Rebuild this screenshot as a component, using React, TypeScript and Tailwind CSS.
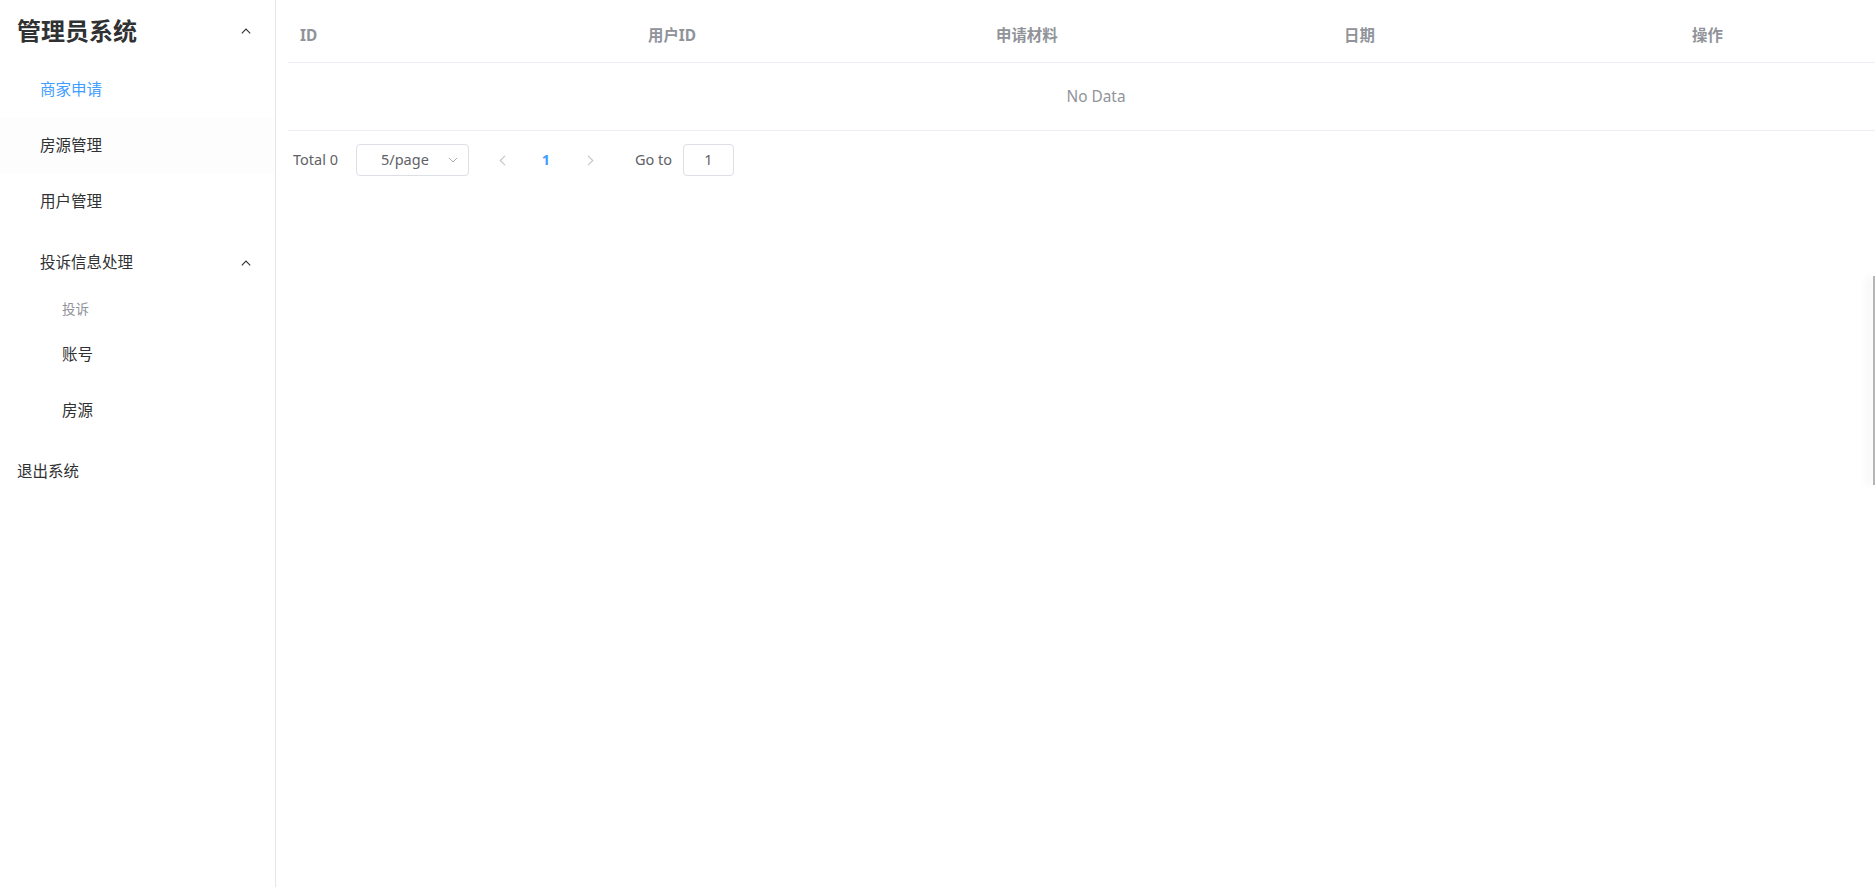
import React from "react";

const ChevronUp = () => (
  <svg width="10" height="6" viewBox="0 0 10 6" fill="none">
    <polyline points="0.8,5.3 5,1.1 9.2,5.3" stroke="#303133" strokeWidth="1.1" />
  </svg>
);

const ChevronDown = () => (
  <svg width="10" height="6" viewBox="0 0 10 6" fill="none">
    <polyline points="0.8,0.8 5,5 9.2,0.8" stroke="#a8abb2" strokeWidth="1" />
  </svg>
);

const ArrowLeft = () => (
  <svg width="7" height="11" viewBox="0 0 7 11" fill="none">
    <polyline points="6,0.8 1.2,5.5 6,10.2" stroke="#c0c4cc" strokeWidth="1.1" />
  </svg>
);

const ArrowRight = () => (
  <svg width="7" height="11" viewBox="0 0 7 11" fill="none">
    <polyline points="1,0.8 5.8,5.5 1,10.2" stroke="#c0c4cc" strokeWidth="1.1" />
  </svg>
);

const cols = ["ID", "用户ID", "申请材料", "日期", "操作"];

export default function App() {
  return (
    <div className="relative flex h-[887px] w-[1875px] overflow-hidden bg-white font-['Noto_Sans','Noto_Sans_CJK_SC',sans-serif] text-[#303133]">
      {/* Sidebar */}
      <aside className="h-full w-[276px] shrink-0 border-r border-[#e4e6eb]">
        <div className="flex h-[62px] items-center justify-between pl-[17px] pr-[24px]">
          <span className="text-[24px] font-bold leading-none text-[#303133]">管理员系统</span>
          <ChevronUp />
        </div>
        <div className="flex h-[56px] items-center pl-[40px] text-[15.5px] text-[#409eff]">商家申请</div>
        <div className="flex h-[56px] items-center bg-[#fdfdfd] pl-[40px] text-[15.5px]">房源管理</div>
        <div className="flex h-[56px] items-center pl-[40px] text-[15.5px]">用户管理</div>
        <div className="mt-[5px] flex h-[56px] items-center justify-between pl-[40px] pr-[24px] text-[15.5px]">
          <span>投诉信息处理</span>
          <ChevronUp />
        </div>
        <div className="flex h-[36px] items-center pl-[62px] text-[13.5px] text-[#909399]">投诉</div>
        <div className="flex h-[56px] items-center pl-[62px] text-[15.5px]">账号</div>
        <div className="flex h-[56px] items-center pl-[62px] text-[15.5px]">房源</div>
        <div className="mt-[5px] flex h-[56px] items-center pl-[17px] text-[15.5px]">退出系统</div>
      </aside>

      {/* Main */}
      <main className="min-w-0 flex-1 overflow-hidden pl-[12px] pt-[10px]">
        <div className="w-[1616px]">
          <div className="flex h-[53px] w-[1740px] items-center border-b border-[#ebeef5]">
            {cols.map((c) => (
              <div key={c} className="w-[348px] shrink-0 px-[12px] text-[15.4px] font-bold text-[#909399]">
                {c}
              </div>
            ))}
          </div>
          <div className="flex h-[68px] w-[1740px] items-center border-b border-[#ebeef5]">
            <div className="w-[1616px] text-center text-[15.4px] text-[#909399]">No Data</div>
          </div>
        </div>

        {/* Pagination */}
        <div className="mt-[13px] flex h-[32px] items-center pl-[5px] text-[14.5px] text-[#606266]">
          <span className="w-[63px] shrink-0">Total 0</span>
          <div className="relative flex h-[32px] w-[113px] shrink-0 items-center rounded-[4px] border border-[#dcdfe6] pl-[24px]">
            <span>5/page</span>
            <span className="absolute right-[10px] top-[12px] flex">
              <ChevronDown />
            </span>
          </div>
          <div className="ml-[17px] flex h-[32px] w-[32px] shrink-0 items-center justify-center">
            <ArrowLeft />
          </div>
          <div className="ml-[12px] flex h-[32px] w-[32px] shrink-0 items-center justify-center font-bold text-[#409eff]">
            1
          </div>
          <div className="ml-[12px] flex h-[32px] w-[32px] shrink-0 items-center justify-center">
            <ArrowRight />
          </div>
          <span className="ml-[29px] w-[48px] shrink-0">Go to</span>
          <div className="flex h-[32px] w-[51px] shrink-0 items-center justify-center rounded-[4px] border border-[#dcdfe6] text-[#606266]">
            1
          </div>
        </div>
      </main>

      {/* Right edge floating tab */}
      <div className="absolute right-0 top-[276px] h-[209px] w-[2px] bg-[#b5b5b5] shadow-[-4px_0_10px_rgba(0,0,0,0.14)]" />
    </div>
  );
}
